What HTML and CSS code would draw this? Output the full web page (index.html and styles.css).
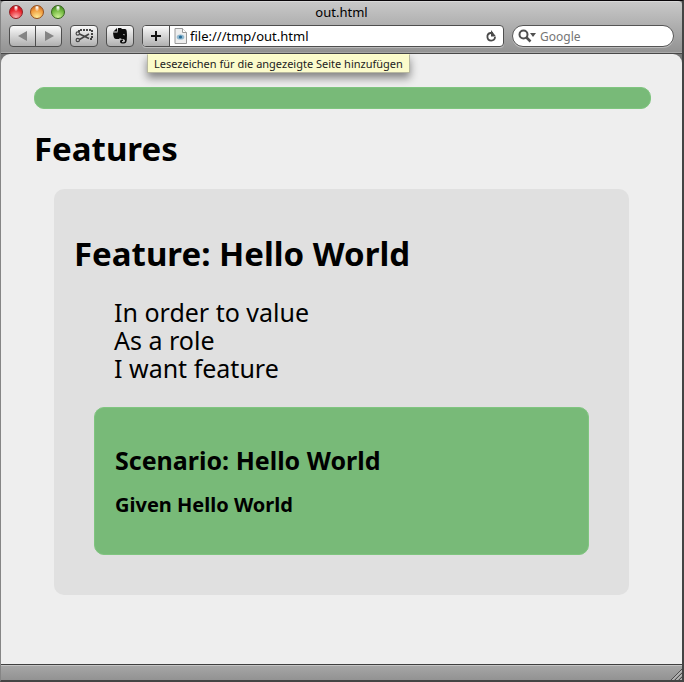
FILE: index.html
```html
<!DOCTYPE html>
<html lang="de">
<head>
<meta charset="utf-8">
<title>out.html</title>
<link rel="stylesheet" href="styles.css">
</head>
<body>
<div class="window">
  <header class="chrome">
    <div class="titlebar">
      <div class="lights">
        <button class="light light-red" aria-label="Schließen"></button>
        <button class="light light-amber" aria-label="Minimieren"></button>
        <button class="light light-green" aria-label="Zoomen"></button>
      </div>
      <div class="title">out.html</div>
    </div>
    <div class="toolbar">
      <div class="nav">
        <button class="tool" aria-label="Zurück"><svg width="12" height="10" viewBox="0 0 12 10"><path d="M10 0v10L1 5z" fill="#848484"/></svg></button>
        <button class="tool" aria-label="Vorwärts"><svg width="12" height="10" viewBox="0 0 12 10"><path d="M2 0v10l9-5z" fill="#848484"/></svg></button>
      </div>
      <button class="tool tool-single" aria-label="Web Clip">
        <svg width="18" height="14" viewBox="0 0 18 14" fill="none"><path d="M4 3V1h13v9h-3" stroke="#111" stroke-width="1.500" stroke-dasharray="2 1"/><path d="M4.500 5L14 9.500M4.500 10.500L14 5" stroke="#444" stroke-width="1.500"/><circle cx="2.800" cy="4.500" r="1.700" stroke="#444" stroke-width="1.200"/><circle cx="2.800" cy="11" r="1.700" stroke="#444" stroke-width="1.200"/></svg>
      </button>
      <button class="tool tool-single" aria-label="Evernote">
        <svg width="16" height="18" viewBox="0 0 16 18"><path d="M1 5L5 1v3.500H1zM6 1h3l1 1h3q1.500 0 1.700 2 .6 4 .1 9-.3 3.500-3 3.500H10q-2 0-2-2t2-2h1v1.500H10v1.200h2q1-.2 1-2-.8-1.200-2.500-1.200-2 0-2.500-1l-1 1H4Q2 12 1.500 9L1 5.500h4.500z" fill="#0b0b0b"/><path d="M11 7.500q1.600-1 2 .8l-2-.3z" fill="#ddd"/></svg>
      </button>
      <div class="location">
        <button class="tool tool-add" aria-label="Lesezeichen hinzufügen" aria-describedby="tip"><svg width="10" height="10" viewBox="0 0 10 10"><path d="M5 0v10M0 5h10" stroke="#111" stroke-width="2"/></svg></button>
        <label class="address">
          <svg width="13" height="16" viewBox="0 0 13 16"><path d="M1 .5h7.500l4 4v11H1z" fill="#eee" stroke="#999"/><path d="M8.500.5v4h4" fill="#fff" stroke="#999"/><ellipse cx="6.500" cy="9" rx="3.800" ry="2.600" fill="#91b8cf"/><circle cx="6.500" cy="9" r="1.600" fill="#246b97"/></svg>
          <input type="text" value="file:///tmp/out.html" aria-label="Adresse">
        </label>
        <button class="reload" aria-label="Neu laden"><svg width="12" height="12" viewBox="0 0 12 12"><path d="M8 3H5.500a3.800 3.800 0 1 0 4.500 4" fill="none" stroke="#4a4a4a" stroke-width="1.800"/><path d="M6 0v6.500h5z" fill="#4a4a4a"/></svg></button>
        <div class="tooltip" id="tip" role="tooltip">Lesezeichen für die angezeigte Seite hinzufügen</div>
      </div>
      <label class="search">
        <svg width="18" height="14" viewBox="0 0 18 14"><circle cx="5.500" cy="5.500" r="4" fill="none" stroke="#505050" stroke-width="2"/><path d="M8.500 8.500l4 4" stroke="#505050" stroke-width="2.500"/><path d="M12 4h6l-3 4z" fill="#505050"/></svg>
        <input type="text" placeholder="Google" aria-label="Google">
      </label>
    </div>
  </header>
  <main class="page">
    <div class="summary"></div>
    <h1>Features</h1>
    <section class="feature">
      <h2>Feature: Hello World</h2>
      <p class="narrative">In order to value<br>As a role<br>I want feature</p>
      <article class="scenario">
        <h3>Scenario: Hello World</h3>
        <h4>Given Hello World</h4>
      </article>
    </section>
  </main>
  <footer class="statusbar">
    <svg width="12" height="12" viewBox="0 0 12 12"><path d="M1 12L12 1M5 12l7-7M9 12l3-3" stroke="#4c4c4c"/><path d="M2.500 12L12 2.500M6.500 12L12 6.500M10.500 12l1.500-1.500" stroke="#ccc"/></svg>
  </footer>
</div>
</body>
</html>
```
FILE: styles.css
```css
* { box-sizing: border-box; }

body {
  margin: 0;
  background: #444;
  font-family: "Noto Sans", "Open Sans", sans-serif;
  color: #000;
}

button, input { font: inherit; padding: 0; margin: 0; }

.window {
  min-height: 100vh;
  display: flex;
  flex-direction: column;
  border: solid #444;
  border-width: 1px 2px 2px 1px;
  border-top-color: #080508;
  border-left-color: #858585;
  background: #777;
}

.chrome {
  height: 53px;
  border-top: 1px solid #d8d8d8;
  border-bottom: 1px solid #484848;
  border-radius: 4px 4px 0 0;
  background: linear-gradient(#c8c8c8, #929292);
  box-shadow: inset 0 -1px #aaa;
}

.titlebar {
  display: grid;
  grid-template-columns: 1fr auto 1fr;
  height: 22px;
}

.title { font-size: 13px; line-height: 21px; }

.lights { display: flex; gap: 7px; padding: 3px 8px; }

.light {
  width: 14px;
  height: 14px;
  border: 1px solid;
  border-radius: 50%;
}
.light-red { border-color: #8e2024; background: radial-gradient(ellipse at 50% 12%, #fff 0 4%, transparent 28%), radial-gradient(circle at 50% 95%, #ffb4b4, #e8242b 60%, #a80f18); }
.light-amber { border-color: #96501c; background: radial-gradient(ellipse at 50% 12%, #fff 0 4%, transparent 28%), radial-gradient(circle at 50% 95%, #ffef9a, #f19a3c 60%, #b3581a); }
.light-green { border-color: #35661c; background: radial-gradient(ellipse at 50% 12%, #fff 0 4%, transparent 28%), radial-gradient(circle at 50% 95%, #d2f59a, #6db53c 60%, #38751c); }

.toolbar { display: flex; gap: 8px; padding: 1px 8px; }

.nav { display: flex; }

.tool {
  display: grid;
  place-items: center;
  width: 28px;
  height: 22px;
  border: 1px solid #4e4e4e;
  border-radius: 4px;
  background: linear-gradient(#fafafa, #b0b0b0);
}
.nav .tool { width: 27px; }
.nav .tool:first-child { border-radius: 4px 0 0 4px; }
.nav .tool:last-child { margin-left: -1px; border-radius: 0 4px 4px 0; }

.location {
  position: relative;
  display: flex;
  flex: 1;
  height: 22px;
  border: 1px solid #4e4e4e;
  border-radius: 4px;
  background: #fff;
  box-shadow: 0 1px #bbb;
}

.tool-add {
  width: 27px;
  height: 20px;
  border-width: 0 1px 0 0;
  border-radius: 3px 0 0 3px;
}

.address { display: flex; flex: 1; align-items: center; gap: 3px; padding-left: 4px; }

input {
  flex: 1;
  width: 0;
  min-width: 0;
  border: 0;
  outline: 0;
  background: none;
  font-size: 13px;
}

.reload { width: 24px; border: 0; background: none; display: grid; place-items: center; }

.tooltip {
  position: absolute;
  top: 28px;
  left: 4px;
  padding: 0 6px;
  border: 1px solid #b8b8a0;
  border-top-color: #ffffc8;
  background: #fbfbcb;
  box-shadow: 0 5px 9px rgba(0, 0, 0, .45);
  font-size: 11px;
  line-height: 17px;
  white-space: nowrap;
  color: #222;
}

.search {
  display: flex;
  align-items: center;
  gap: 4px;
  flex: 0 0 162px;
  height: 22px;
  padding: 0 5px;
  border: 1px solid #555;
  border-radius: 11px;
  background: #fff;
  box-shadow: 0 1px #bbb;
}
.search input { font-size: 12px; }
.search input::placeholder { color: #757575; opacity: 1; }

.page {
  flex: 1;
  padding: 33px 31px 33px 33px;
  border-radius: 9px 9px 0 0;
  background: #eee;
}

.summary, .scenario {
  border: 1px solid #80c580;
  border-radius: 10px;
  background: #78ba78;
}

.summary { height: 22px; }

h1, h2, h3, h4, p { margin: 0; }

h1, h2 { font-size: 33px; line-height: 40px; }
h1 { margin: 20px 0; }

.feature {
  margin: 0 22px 0 20px;
  padding: 45px 40px 40px 20px;
  border-radius: 10px;
  background: #e0e0e0;
}

.narrative { margin: 24px 0 25px 40px; font-size: 25px; line-height: 28px; }

.scenario { margin-left: 20px; padding: 34px 20px 35px; }

h3 { margin-bottom: 13px; font-size: 25px; line-height: 36px; }
h4 { font-size: 20px; line-height: 28px; }

.statusbar {
  display: flex;
  justify-content: flex-end;
  align-items: flex-end;
  height: 16px;
  border-top: 1px solid #3f3f3f;
  background: linear-gradient(#c4c4c4 0 1px, #a6a6a6 1px, #929292);
}
```
